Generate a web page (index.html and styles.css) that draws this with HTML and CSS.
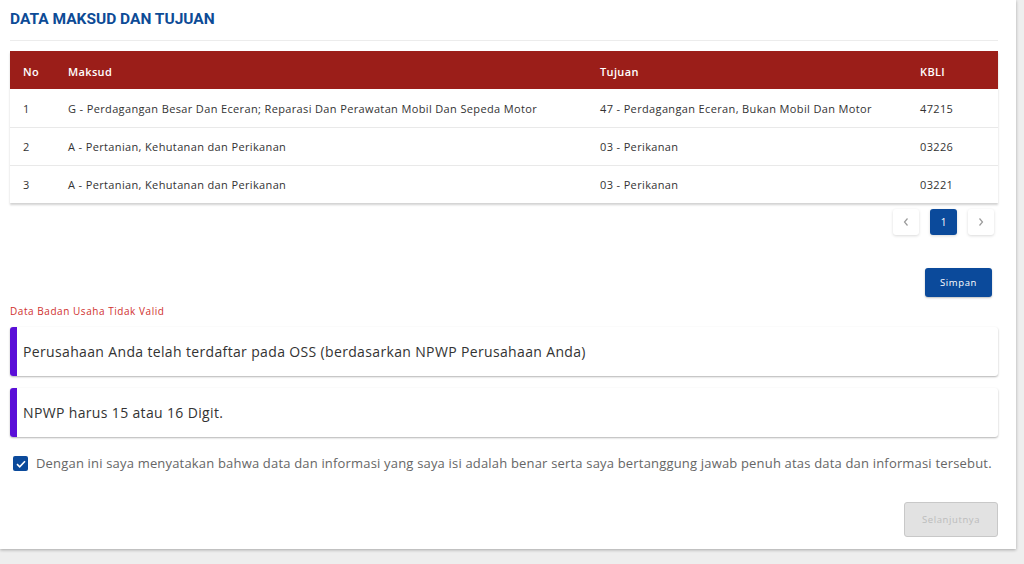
FILE: index.html
```html
<!DOCTYPE html>
<html lang="id">
<head>
<meta charset="utf-8">
<title>Data Maksud dan Tujuan</title>
<link rel="stylesheet" href="styles.css">
</head>
<body>
<div class="card">
  <h2 class="title">DATA MAKSUD DAN TUJUAN</h2>
  <div class="table-wrap">
    <table class="tbl">
      <thead>
        <tr><th class="c-no">No</th><th class="c-maksud">Maksud</th><th class="c-tujuan">Tujuan</th><th class="c-kbli">KBLI</th></tr>
      </thead>
      <tbody>
        <tr><td>1</td><td>G - Perdagangan Besar Dan Eceran; Reparasi Dan Perawatan Mobil Dan Sepeda Motor</td><td>47 - Perdagangan Eceran, Bukan Mobil Dan Motor</td><td>47215</td></tr>
        <tr><td>2</td><td>A - Pertanian, Kehutanan dan Perikanan</td><td>03 - Perikanan</td><td>03226</td></tr>
        <tr><td>3</td><td>A - Pertanian, Kehutanan dan Perikanan</td><td>03 - Perikanan</td><td>03221</td></tr>
      </tbody>
    </table>
  </div>
  <div class="pager">
    <button class="pg">
      <svg width="8" height="10" viewBox="0 0 8 10"><path d="M5.5 1.5 2.5 5l3 3.5" fill="none" stroke="#9a9a9a" stroke-width="1.2"/></svg>
    </button>
    <button class="pg active">1</button>
    <button class="pg">
      <svg width="8" height="10" viewBox="0 0 8 10"><path d="M2.5 1.5 5.5 5l-3 3.5" fill="none" stroke="#9a9a9a" stroke-width="1.2"/></svg>
    </button>
  </div>
  <div class="save-row"><button class="btn-save">Simpan</button></div>
  <p class="err">Data Badan Usaha Tidak Valid</p>
  <div class="alert">Perusahaan Anda telah terdaftar pada OSS (berdasarkan NPWP Perusahaan Anda)</div>
  <div class="alert">NPWP harus 15 atau 16 Digit.</div>
  <label class="agree">
    <span class="chk"><svg width="10" height="8" viewBox="0 0 10 8"><path d="M1 4.2 3.7 6.8 9 1.2" fill="none" stroke="#fff" stroke-width="1.6"/></svg></span>
    <span>Dengan ini saya menyatakan bahwa data dan informasi yang saya isi adalah benar serta saya bertanggung jawab penuh atas data dan informasi tersebut.</span>
  </label>
  <div class="next-row"><button class="btn-next">Selanjutnya</button></div>
</div>
</body>
</html>
```

FILE: styles.css
```css
* { box-sizing: border-box; }
html, body { margin: 0; padding: 0; }
body {
  background: #eeeeee;
  width: 1024px;
  height: 564px;
  overflow: hidden;
  font-family: "Open Sans", "DejaVu Sans", sans-serif;
  color: #333;
}
.card {
  width: 1016px;
  height: 549px;
  background: #fff;
  box-shadow: 0 1px 3px rgba(0,0,0,0.3);
  padding: 0 18px 0 10px;
}
.title {
  margin: 0;
  height: 41px;
  padding-top: 10px;
  font-family: Roboto, "Liberation Sans", sans-serif;
  font-weight: 700;
  font-size: 15.5px;
  color: #0d4b96;
  border-bottom: 1px solid #ececec;
}
.table-wrap {
  margin-top: 10px;
  box-shadow: 0 2px 2px rgba(0,0,0,0.18);
}
.tbl {
  width: 100%;
  border-collapse: collapse;
  font-size: 11px;
  letter-spacing: 0.36px;
}
.tbl th {
  background: #9b1e19;
  color: #fff;
  font-weight: 600;
  text-align: left;
  height: 38px;
  padding: 2px 0 0;
}
.tbl td {
  height: 38px;
  padding: 1px 0 0;
  color: #333;
  border-top: 1px solid #e9e9e9;
}
.tbl tbody tr:first-child td { border-top: none; padding-top: 2px; }
.tbl th:first-child, .tbl td:first-child { padding-left: 13px; }
.c-no { width: 58px; }
.c-maksud { width: 532px; }
.c-tujuan { width: 320px; }
.pager {
  display: flex;
  justify-content: flex-end;
  gap: 11px;
  padding: 6px 4px 0 0;
}
.pg {
  width: 26px;
  height: 26px;
  border: none;
  border-radius: 3px;
  background: #fff;
  box-shadow: 0 1px 3px rgba(0,0,0,0.15);
  display: flex;
  align-items: center;
  justify-content: center;
  font-family: inherit;
  font-size: 10px;
  color: #fff;
  padding: 0;
}
.pg.active { background: #0b4a9b; width: 27px; }
.save-row {
  display: flex;
  justify-content: flex-end;
  padding: 33px 6px 0 0;
}
.btn-save {
  width: 67px;
  height: 29px;
  border: none;
  border-radius: 3px;
  background: #0b4a9b;
  color: #fff;
  font-family: inherit;
  font-size: 9.5px;
  letter-spacing: 0.6px;
  box-shadow: 0 1px 2px rgba(0,0,0,0.25);
}
.err {
  margin: 7px 0 0;
  font-size: 10px;
  letter-spacing: 0.55px;
  color: #d0312d;
  height: 23px;
}
.alert {
  height: 49px;
  margin-bottom: 12px;
  border-left: 7px solid #5a0fd8;
  border-radius: 3px;
  box-shadow: 0 1px 2px rgba(0,0,0,0.3);
  display: flex;
  align-items: center;
  padding-left: 6px;
  font-size: 14px;
  letter-spacing: 0.35px;
  color: #333;
}
.agree {
  display: flex;
  align-items: flex-start;
  gap: 8px;
  padding: 5px 0 0 3px;
  font-size: 13px;
  letter-spacing: 0.18px;
  color: #666;
}
.chk {
  width: 15px;
  height: 15px;
  margin-top: 2px;
  flex: none;
  border-radius: 2px;
  background: #0b4a9b;
  display: flex;
  align-items: center;
  justify-content: center;
}
.next-row {
  display: flex;
  justify-content: flex-end;
  padding: 30px 0 0 0;
}
.btn-next {
  width: 94px;
  height: 35px;
  border: 1px solid #c8c8c8;
  border-radius: 3px;
  background: #e2e2e2;
  color: #bcbcbc;
  font-family: inherit;
  font-size: 9.5px;
  letter-spacing: 0.6px;
}
```
